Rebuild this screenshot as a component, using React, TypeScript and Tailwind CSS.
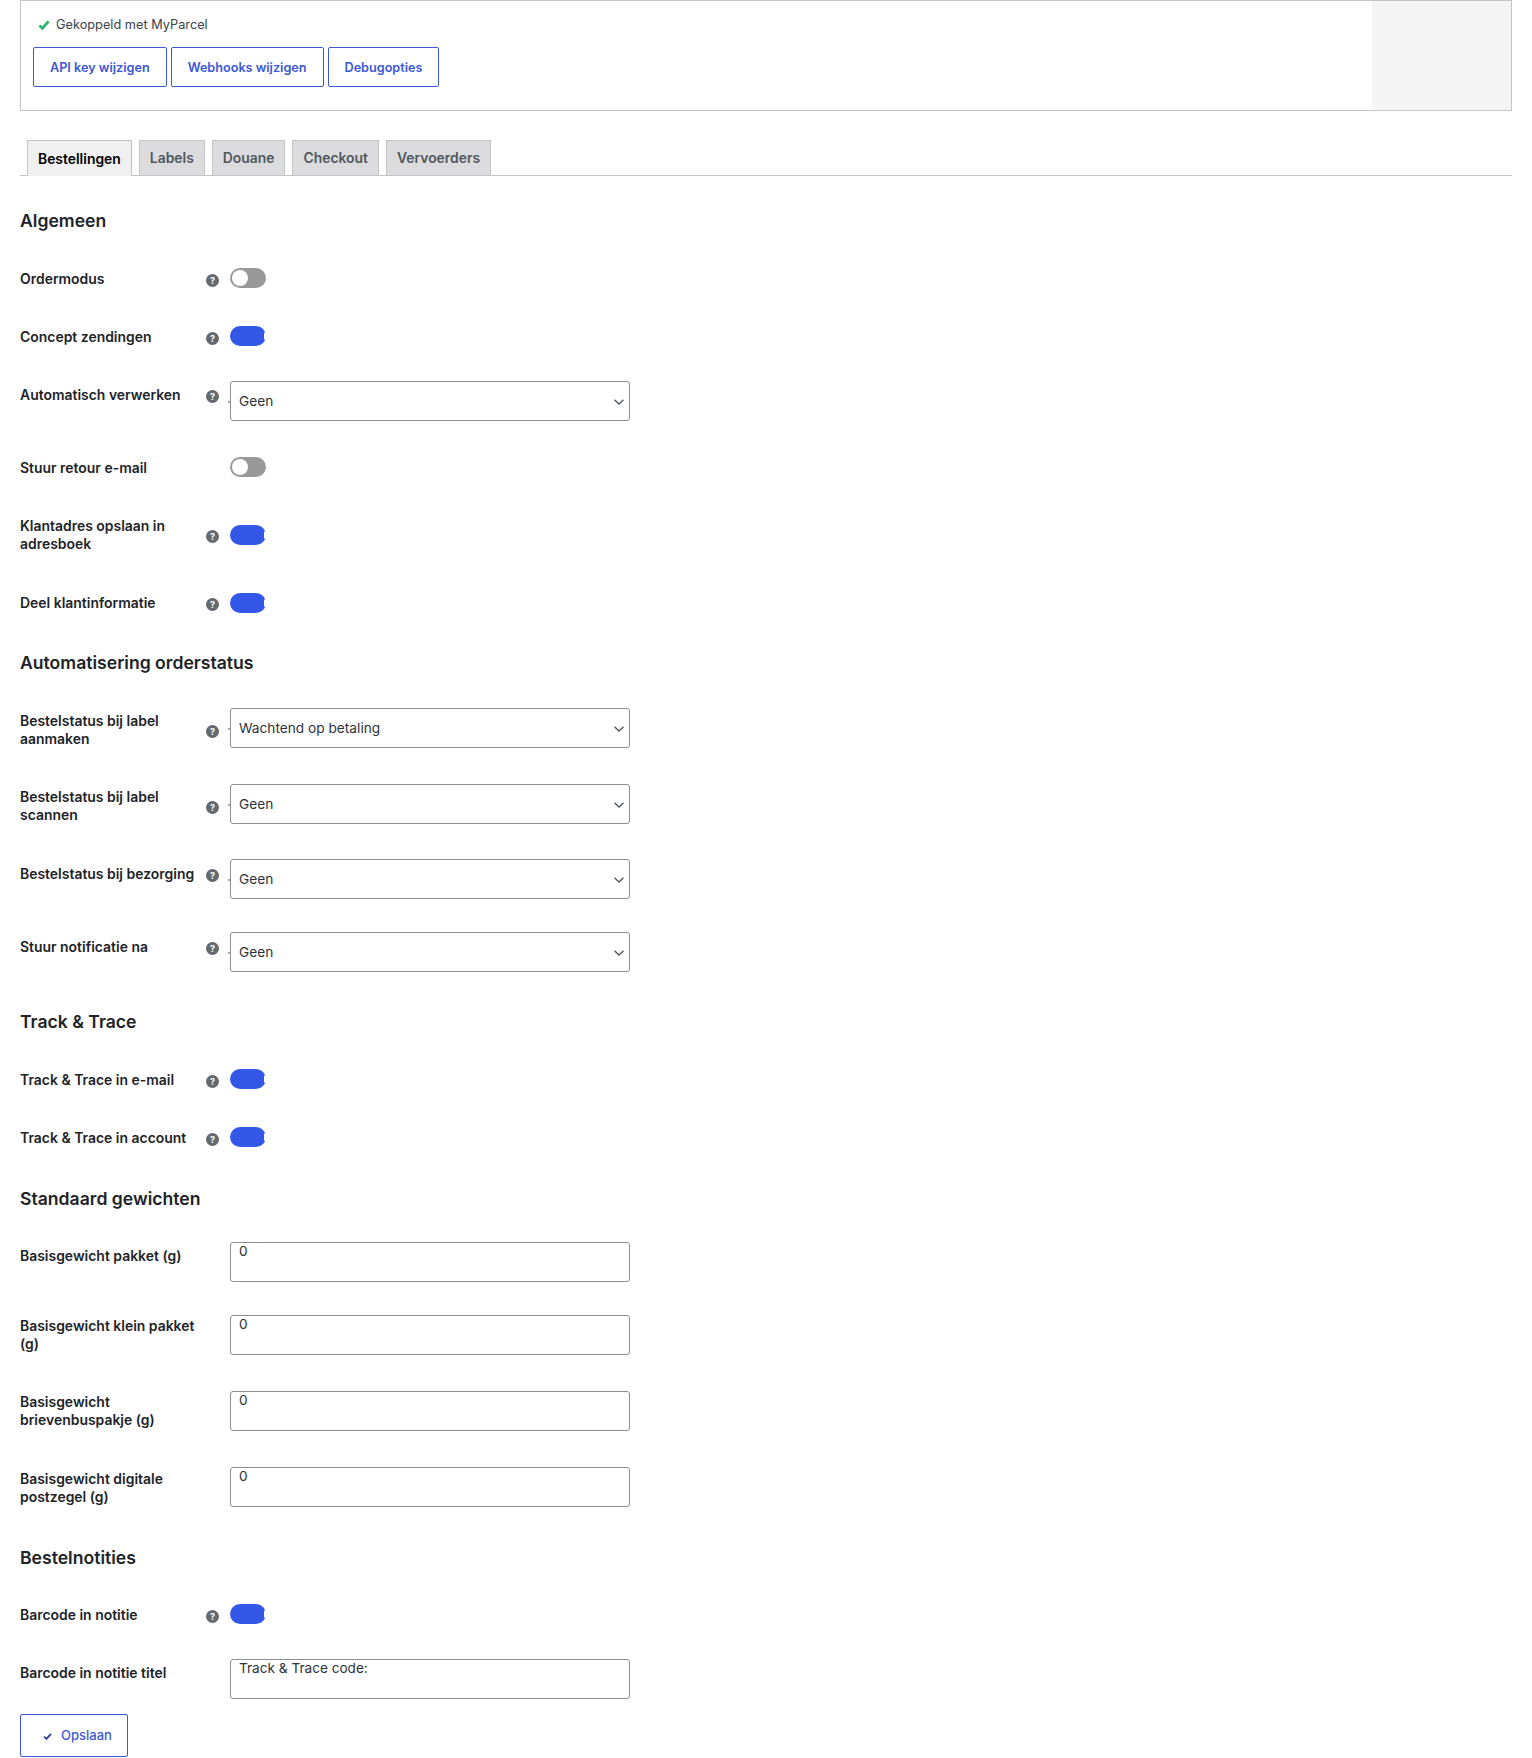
import type { ReactNode } from "react";
import clsx from "clsx";

const selectRowOptions = ["Geen", "Wachtend op betaling"];

function Help({ className }: { className?: string }) {
  return (
    <span
      className={clsx(
        "flex h-[13px] w-[13px] items-center justify-center rounded-full bg-[#646970] text-[9px] font-bold leading-none text-white",
        className
      )}
    >
      ?
    </span>
  );
}

function Toggle({ on = false }: { on?: boolean }) {
  if (on) {
    return (
      <div className="relative h-[20px] w-[36px] rounded-[10px] bg-[#3358e8]">
        <span className="absolute right-[-1px] top-[6px] h-[8px] w-[3px] rounded-full bg-white" />
      </div>
    );
  }
  return (
    <div className="flex h-[20px] w-[36px] items-center rounded-full bg-[#999999] pl-[2px]">
      <span className="h-[16px] w-[16px] rounded-full bg-white" />
    </div>
  );
}

function SelectBox({ value }: { value: string }) {
  return (
    <div className="relative h-[40px] w-[400px]">
      <span className="absolute left-[-2px] top-[20px] h-[2px] w-[2px] rounded-full bg-[#8c8f94]" />
      <select
        defaultValue={value}
        className="h-full w-full appearance-none rounded-[3px] border border-[#8c8f94] bg-white pl-[8px] text-[13.7px] text-[#2c3338] outline-none"
      >
        {selectRowOptions.map((o) => (
          <option key={o}>{o}</option>
        ))}
      </select>
      <svg
        viewBox="0 0 10 6"
        className="pointer-events-none absolute right-[6px] top-[18px] h-[6px] w-[10px]"
        fill="none"
        stroke="#50575e"
        strokeWidth="1.3"
      >
        <path d="M.5 .8 5 5 9.5 .8" />
      </svg>
    </div>
  );
}

function TextBox({ value }: { value: string }) {
  return (
    <input
      readOnly
      value={value}
      className="block h-[40px] w-[400px] rounded-[3px] border border-[#8c8f94] bg-white pb-[22px] pl-[8px] text-[13.6px] leading-[18px] text-[#2c3338] outline-none"
    />
  );
}

function Row({
  label,
  help = true,
  rowClass,
  labelClass = "pt-[21px]",
  helpClass = "mt-[25px]",
  controlClass = "pt-[19px]",
  children,
}: {
  label: string;
  help?: boolean;
  rowClass: string;
  labelClass?: string;
  helpClass?: string;
  controlClass?: string;
  children: ReactNode;
}) {
  return (
    <div className={clsx("flex items-start", rowClass)}>
      <div className={clsx("w-[186px] pr-[6px] text-[13.95px] font-semibold leading-[18px] text-[#1d2327]", labelClass)}>
        {label}
      </div>
      <div className="w-[24px]">{help && <Help className={helpClass} />}</div>
      <div className={controlClass}>{children}</div>
    </div>
  );
}

function Heading({ className, children }: { className: string; children: ReactNode }) {
  return <h2 className={clsx("text-[17.6px] font-semibold leading-[22px] text-[#1d2327]", className)}>{children}</h2>;
}

function OutlineButton({ children }: { children: ReactNode }) {
  return (
    <button className="flex h-[40px] items-center rounded-[2px] border border-[#3c58d8] bg-white px-[16px] pt-[2px] text-[12.65px] font-semibold text-[#3c58d8]">
      {children}
    </button>
  );
}

const tabs = ["Labels", "Douane", "Checkout", "Vervoerders"];

export default function App() {
  return (
    <div className="h-[1758px] overflow-hidden bg-white px-[20px] font-['Inter',sans-serif]">
      <div className="flex h-[111px] border border-t border-[#c3c4c7]">
        <div className="flex-1 pl-[12px]">
          <div className="flex h-[46px] items-center pl-[5px] pt-[2px] text-[12.75px] text-[#3c434a]">
            <svg viewBox="0 0 14 12" className="mr-[6px] h-[10px] w-[12px]" fill="none" stroke="#2cb56d" strokeWidth="3.2">
              <path d="M1.5 6.5 5 10 12.5 1.5" />
            </svg>
            Gekoppeld met MyParcel
          </div>
          <div className="flex gap-[4px]">
            <OutlineButton>API key wijzigen</OutlineButton>
            <OutlineButton>Webhooks wijzigen</OutlineButton>
            <OutlineButton>Debugopties</OutlineButton>
          </div>
        </div>
        <div className="w-[139px] bg-[#f5f5f5]" />
      </div>

      <div className="mt-[29px] flex h-[36px] gap-[7px] border-b border-[#c3c4c7] pl-[7px]">
        <div className="flex h-[36px] items-center border border-b-0 border-[#c3c4c7] bg-[#f0f0f1] px-[10px] pt-[1px] text-[13.9px] font-semibold text-black">
          Bestellingen
        </div>
        {tabs.map((t) => (
          <div
            key={t}
            className="flex h-[35px] items-center border border-b-0 border-[#c3c4c7] bg-[#dcdcde] px-[10px] pt-[1px] text-[13.9px] font-semibold text-[#50575e]"
          >
            {t}
          </div>
        ))}
      </div>

      <Heading className="mt-[34px] mb-[17px]">Algemeen</Heading>
      <Row label="Ordermodus" rowClass="h-[58px]">
        <Toggle />
      </Row>
      <Row label="Concept zendingen" rowClass="h-[58px]">
        <Toggle on />
      </Row>
      <Row label="Automatisch verwerken" rowClass="h-[74px]" controlClass="pt-[16px]">
        <SelectBox value="Geen" />
      </Row>
      <Row label="Stuur retour e-mail" rowClass="h-[67px]" help={false} labelClass="pt-[20px]" controlClass="pt-[18px]">
        <Toggle />
      </Row>
      <Row label="Klantadres opslaan in adresboek" rowClass="h-[68px]" labelClass="pt-[11px]" helpClass="mt-[24px]">
        <Toggle on />
      </Row>
      <Row label="Deel klantinformatie" rowClass="h-[58px]" labelClass="pt-[20px]" helpClass="mt-[24px]">
        <Toggle on />
      </Row>

      <Heading className="mt-[20px] mb-[18px]">Automatisering orderstatus</Heading>
      <Row label="Bestelstatus bij label aanmaken" rowClass="h-[76px]" labelClass="pt-[20px]" helpClass="mt-[33px]" controlClass="pt-[16px]">
        <SelectBox value="Wachtend op betaling" />
      </Row>
      <Row label="Bestelstatus bij label scannen" rowClass="h-[75px]" labelClass="pt-[20px]" helpClass="mt-[33px]" controlClass="pt-[16px]">
        <SelectBox value="Geen" />
      </Row>
      <Row label="Bestelstatus bij bezorging" rowClass="h-[73px]" labelClass="pt-[22px]" helpClass="mt-[26px]" controlClass="pt-[16px]">
        <SelectBox value="Geen" />
      </Row>
      <Row label="Stuur notificatie na" rowClass="h-[83px]" labelClass="pt-[22px]" helpClass="mt-[26px]" controlClass="pt-[16px]">
        <SelectBox value="Geen" />
      </Row>

      <Heading className="mt-[12px] mb-[17px]">Track &amp; Trace</Heading>
      <Row label="Track &amp; Trace in e-mail" rowClass="h-[58px]">
        <Toggle on />
      </Row>
      <Row label="Track &amp; Trace in account" rowClass="h-[58px]">
        <Toggle on />
      </Row>

      <Heading className="mt-[22px] mb-[13px]">Standaard gewichten</Heading>
      <Row label="Basisgewicht pakket (g)" rowClass="h-[73px]" help={false} labelClass="pt-[24px]">
        <TextBox value="0" />
      </Row>
      <Row label="Basisgewicht klein pakket (g)" rowClass="h-[76px]" help={false} labelClass="pt-[21px]">
        <TextBox value="0" />
      </Row>
      <Row label="Basisgewicht brievenbuspakje (g)" rowClass="h-[76px]" help={false} labelClass="pt-[21px]">
        <TextBox value="0" />
      </Row>
      <Row label="Basisgewicht digitale postzegel (g)" rowClass="h-[79px]" help={false} labelClass="pt-[22px]">
        <TextBox value="0" />
      </Row>

      <Heading className="mt-[20px] mb-[16px]">Bestelnotities</Heading>
      <Row label="Barcode in notitie" rowClass="h-[55px]">
        <Toggle on />
      </Row>
      <Row label="Barcode in notitie titel" rowClass="h-[74px]" help={false} labelClass="pt-[24px]">
        <TextBox value="Track &amp; Trace code:" />
      </Row>

      <button className="flex h-[43px] w-[108px] items-center rounded-[2px] border border-[#3c58d8] bg-white pl-[22px] pt-[1px] text-[13px] font-medium text-[#3c58d8]">
        <svg viewBox="0 0 10 8" className="mr-[9px] h-[7px] w-[9px]" fill="none" stroke="#2f3f8f" strokeWidth="2">
          <path d="M1 4 3.8 6.8 9 1" />
        </svg>
        Opslaan
      </button>
    </div>
  );
}
